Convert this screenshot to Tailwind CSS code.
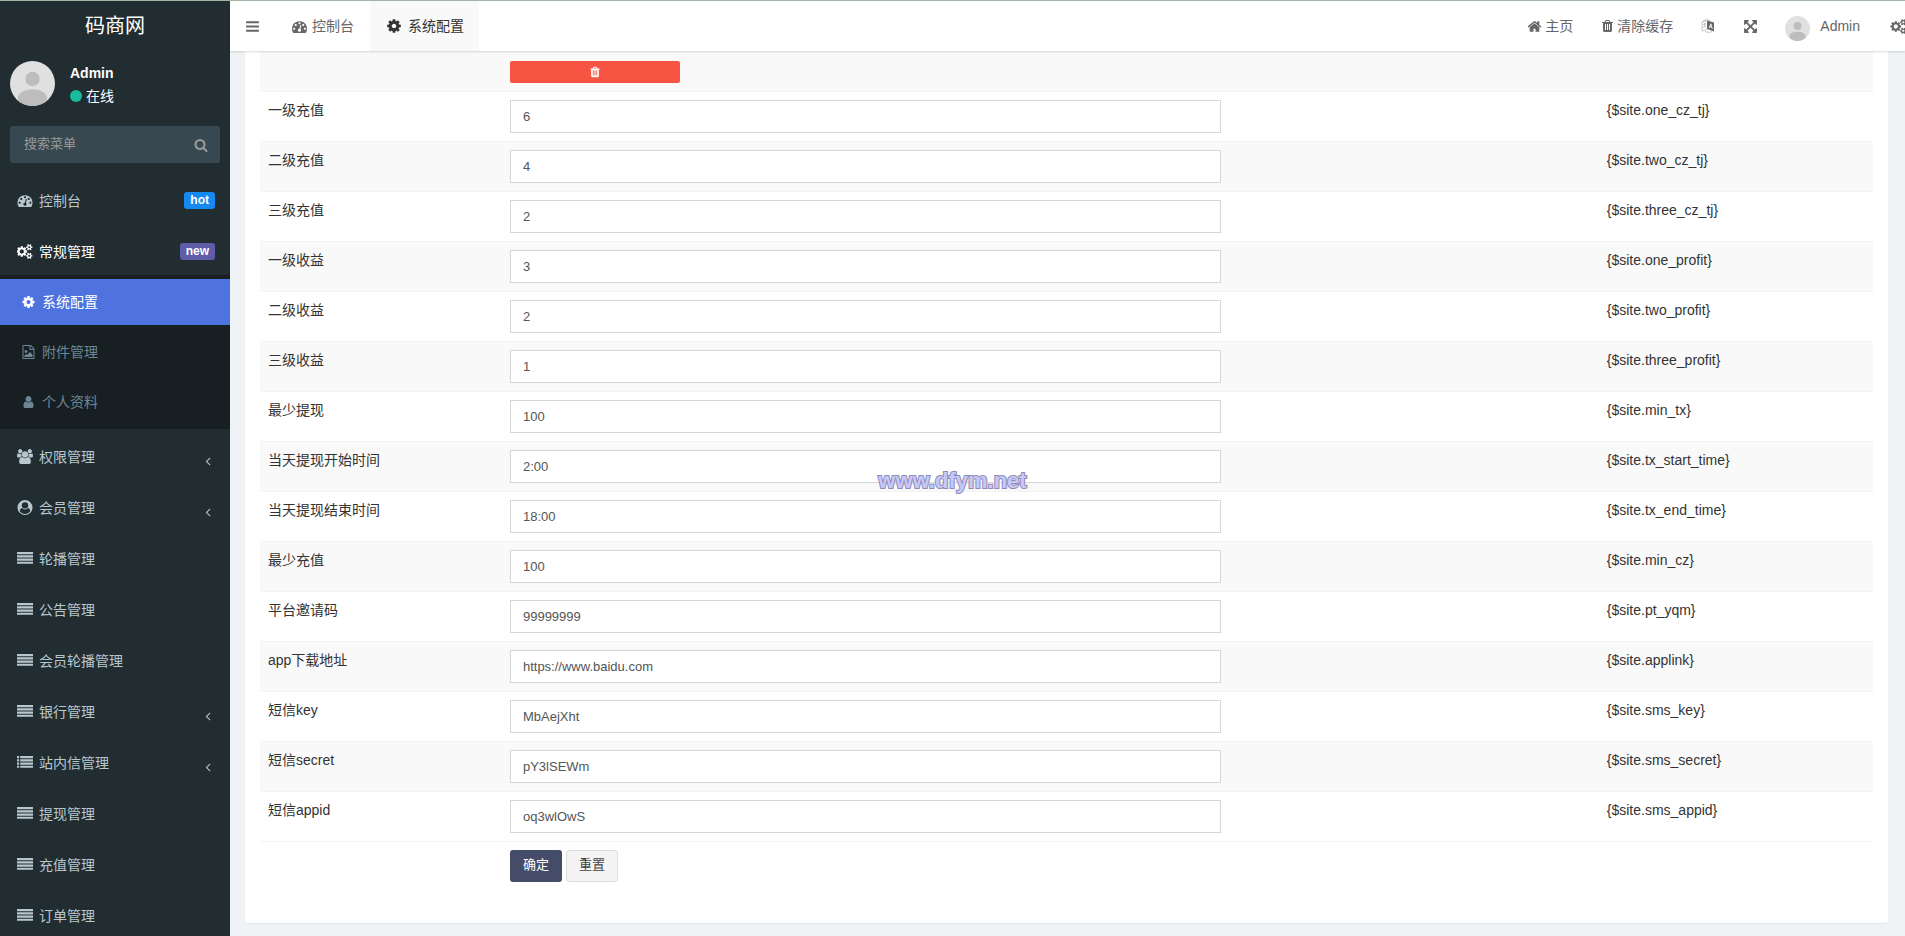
<!DOCTYPE html>
<html lang="zh-CN">
<head>
<meta charset="utf-8">
<meta name="viewport" content="width=device-width, initial-scale=1">
<title>系统配置 - 码商网</title>
<script src="https://cdn.jsdelivr.net/npm/@tailwindcss/browser@4"></script>
</head>
<body class="h-screen overflow-hidden border-t border-[#a3b3a5] bg-[#eff3f6] font-['Liberation_Sans','Noto_Sans_CJK_SC',sans-serif] text-sm text-[#333]">

<svg class="hidden" aria-hidden="true">
  <symbol id="bars" viewBox="0 0 1792 1792"><path d="M1664 1344v128q0 26-19 45t-45 19h-1408q-26 0-45-19t-19-45v-128q0-26 19-45t45-19h1408q26 0 45 19t19 45zm0-512v128q0 26-19 45t-45 19h-1408q-26 0-45-19t-19-45v-128q0-26 19-45t45-19h1408q26 0 45 19t19 45zm0-512v128q0 26-19 45t-45 19h-1408q-26 0-45-19t-19-45v-128q0-26 19-45t45-19h1408q26 0 45 19t19 45z"/></symbol>
  <symbol id="cog" viewBox="0 0 1792 1792"><path d="M1152 896q0-106-75-181t-181-75-181 75-75 181 75 181 181 75 181-75 75-181zm512-109v222q0 12-8 23t-20 13l-185 28q-19 54-39 91 35 50 107 138 10 12 10 25t-9 23q-27 37-99 108t-94 71q-12 0-26-9l-138-108q-44 23-91 38-16 136-29 186-7 28-36 28h-222q-14 0-24.5-8.5t-11.5-21.5l-28-184q-49-16-90-37l-141 107q-10 9-25 9-14 0-25-11-126-114-165-168-7-10-7-23 0-12 8-23 15-21 51-66.5t54-70.5q-27-50-41-99l-183-27q-13-2-21-12.5t-8-23.5v-222q0-12 8-23t19-13l186-28q14-46 39-92-40-57-107-138-10-12-10-24 0-10 9-23 26-36 98.5-107.5t94.5-71.5q13 0 26 10l138 107q44-23 91-38 16-136 29-186 7-28 36-28h222q14 0 24.5 8.5t11.5 21.5l28 184q49 16 90 37l142-107q9-9 24-9 13 0 25 10 129 119 165 170 7 8 7 22 0 12-8 23-15 21-51 66.5t-54 70.5q26 50 41 98l183 28q13 2 21 12.5t8 23.5z"/></symbol>
  <symbol id="cogs" viewBox="0 0 1920 1792"><path d="M832 896q0-106-75-181t-181-75-181 75-75 181 75 181 181 75 181-75 75-181zm768 512q0-52-38-90t-90-38-90 38-38 90q0 53 37.5 90.5t90.5 37.5 90.5-37.5 37.5-90.5zm0-1024q0-52-38-90t-90-38-90 38-38 90q0 53 37.5 90.5t90.5 37.5 90.5-37.5 37.5-90.5zm-384 421v185q0 10-7 19.5t-16 10.5l-155 24q-11 35-32 76 34 48 90 115 7 11 7 20 0 12-7 19-23 30-82.5 89.5t-78.5 59.5q-11 0-21-7l-115-90q-37 19-77 31-11 108-23 155-7 24-30 24h-186q-11 0-20-7.5t-10-17.5l-23-153q-34-10-75-31l-118 89q-7 7-20 7-11 0-21-8-144-133-144-160 0-9 7-19 10-14 41-53t47-61q-23-44-35-82l-152-24q-10-1-17-9.5t-7-19.5v-185q0-10 7-19.5t16-10.5l155-24q11-35 32-76-34-48-90-115-7-11-7-20 0-12 7-20 22-30 82-89t79-59q11 0 21 7l115 90q34-18 77-32 11-108 23-154 7-24 30-24h186q11 0 20 7.5t10 17.5l23 153q34 10 75 31l118-89q8-7 20-7 11 0 21 8 144 133 144 160 0 8-7 19-12 16-42 54t-45 60q23 48 34 82l152 23q10 2 17 10.5t7 19.5zm640 533v140q0 16-149 31-12 27-30 52 51 113 51 138 0 4-4 7-122 71-124 71-8 0-46-47t-52-68q-20 2-30 2t-30-2q-14 21-52 68t-46 47q-2 0-124-71-4-3-4-7 0-25 51-138-18-25-30-52-149-15-149-31v-140q0-16 149-31 13-29 30-52-51-113-51-138 0-4 4-7 4-2 35-20t59-34 30-16q8 0 46 46.5t52 67.5q20-2 30-2t30 2q51-71 92-112l6-2q4 0 124 70 4 3 4 7 0 25-51 138 17 23 30 52 149 15 149 31zm0-1024v140q0 16-149 31-12 27-30 52 51 113 51 138 0 4-4 7-122 71-124 71-8 0-46-47t-52-68q-20 2-30 2t-30-2q-14 21-52 68t-46 47q-2 0-124-71-4-3-4-7 0-25 51-138-18-25-30-52-149-15-149-31v-140q0-16 149-31 13-29 30-52-51-113-51-138 0-4 4-7 4-2 35-20t59-34 30-16q8 0 46 46.5t52 67.5q20-2 30-2t30 2q51-71 92-112l6-2q4 0 124 70 4 3 4 7 0 25-51 138 17 23 30 52 149 15 149 31z"/></symbol>
  <symbol id="search" viewBox="0 0 1792 1792"><path d="M1216 832q0-185-131.5-316.5t-316.5-131.5-316.5 131.5-131.5 316.5 131.5 316.5 316.5 131.5 316.5-131.5 131.5-316.5zm512 832q0 52-38 90t-90 38q-54 0-90-38l-343-342q-179 124-399 124-143 0-273.5-55.5t-225-150-150-225-55.5-273.5 55.5-273.5 150-225 225-150 273.5-55.5 273.5 55.5 225 150 150 225 55.5 273.5q0 220-124 399l343 343q37 37 37 90z"/></symbol>
  <symbol id="dashboard" viewBox="0 0 1792 1792"><path d="M384 1152q0-53-37.5-90.5t-90.5-37.5-90.5 37.5-37.5 90.5 37.5 90.5 90.5 37.5 90.5-37.5 37.5-90.5zm192-448q0-53-37.5-90.5t-90.5-37.5-90.5 37.5-37.5 90.5 37.5 90.5 90.5 37.5 90.5-37.5 37.5-90.5zm428 481l101-382q6-26-7.5-48.5t-38.5-29.5-48 6.5-30 39.5l-101 382q-60 5-107 43.5t-63 98.5q-20 77 20 146t117 89 146-20 89-117q16-60-6-117t-72-91zm660-33q0-53-37.5-90.5t-90.5-37.5-90.5 37.5-37.5 90.5 37.5 90.5 90.5 37.5 90.5-37.5 37.5-90.5zm-640-640q0-53-37.5-90.5t-90.5-37.5-90.5 37.5-37.5 90.5 37.5 90.5 90.5 37.5 90.5-37.5 37.5-90.5zm448 192q0-53-37.5-90.5t-90.5-37.5-90.5 37.5-37.5 90.5 37.5 90.5 90.5 37.5 90.5-37.5 37.5-90.5zm320 448q0 261-141 483-19 29-54 29h-1402q-35 0-54-29-141-221-141-483 0-182 71-348t191-286 286-191 348-71 348 71 286 191 191 286 71 348z"/></symbol>
  <symbol id="home" viewBox="0 0 1792 1792"><path d="M1472 992v480q0 26-19 45t-45 19h-384v-384h-256v384h-384q-26 0-45-19t-19-45v-480q0-1 .5-3t.5-3l575-474 575 474q1 2 1 6zm223-69l-62 74q-8 9-21 11h-3q-13 0-21-7l-692-577-692 577q-12 8-24 7-13-2-21-11l-62-74q-8-10-7-23.5t11-21.5l719-599q32-26 76-26t76 26l244 204v-195q0-14 9-23t23-9h192q14 0 23 9t9 23v408l219 182q10 8 11 21.5t-7 23.5z"/></symbol>
  <symbol id="trash" viewBox="192 0 1408 1792"><path d="M704 1376v-704q0-14-9-23t-23-9h-64q-14 0-23 9t-9 23v704q0 14 9 23t23 9h64q14 0 23-9t9-23zm256 0v-704q0-14-9-23t-23-9h-64q-14 0-23 9t-9 23v704q0 14 9 23t23 9h64q14 0 23-9t9-23zm256 0v-704q0-14-9-23t-23-9h-64q-14 0-23 9t-9 23v704q0 14 9 23t23 9h64q14 0 23-9t9-23zm-544-992h448l-48-117q-7-9-17-11h-317q-10 2-17 11zm928 32v64q0 14-9 23t-23 9h-96v948q0 83-47 143.5t-113 60.5h-832q-66 0-113-58.5t-47-141.5v-952h-96q-14 0-23-9t-9-23v-64q0-14 9-23t23-9h309l70-167q15-37 54-63t79-26h320q40 0 79 26t54 63l70 167h309q14 0 23 9t9 23z"/></symbol>
  <symbol id="arrows" viewBox="0 0 1792 1792"><path d="M1411 541l-355 355 355 355 144-144q29-31 70-14 39 17 39 59v448q0 26-19 45t-45 19h-448q-42 0-59-40-17-39 14-69l144-144-355-355-355 355 144 144q31 30 14 69-17 40-59 40h-448q-26 0-45-19t-19-45v-448q0-42 40-59 39-17 69 14l144 144 355-355-355-355-144 144q-19 19-45 19-12 0-24-5-40-17-40-59v-448q0-26 19-45t45-19h448q42 0 59 40 17 39-14 69l-144 144 355 355 355-355-144-144q-31-30-14-69 17-40 59-40h448q26 0 45 19t19 45v448q0 42-39 59-13 5-25 5-26 0-45-19z"/></symbol>
  <symbol id="user" viewBox="0 0 1792 1792"><path d="M1536 1399q0 109-62.5 187t-150.5 78h-854q-88 0-150.5-78t-62.5-187q0-85 8.5-160.5t31.5-152 58.5-131 94-89 134.5-34.5q131 128 313 128t313-128q76 0 134.5 34.5t94 89 58.5 131 31.5 152 8.5 160.5zm-256-887q0 159-112.5 271.5t-271.5 112.5-271.5-112.5-112.5-271.5 112.5-271.5 271.5-112.5 271.5 112.5 112.5 271.5z"/></symbol>
  <symbol id="group" viewBox="0 0 1920 1792"><path d="M593 896q-162 5-265 128h-134q-82 0-138-40.5t-56-118.5q0-353 124-353 6 0 43.5 21t97.5 42.5 119 21.5q67 0 133-23-5 37-5 66 0 139 81 256zm1071 637q0 120-73 189.5t-194 69.5h-874q-121 0-194-69.5t-73-189.5q0-53 3.5-103.5t14-109 26.5-108.5 43-97.5 62-81 85.5-53.5 111.5-20q10 0 43 21.5t73 48 107 48 135 21.5 135-21.5 107-48 73-48 43-21.5q61 0 111.5 20t85.5 53.5 62 81 43 97.5 26.5 108.5 14 109 3.5 103.5zm-1024-1277q0 106-75 181t-181 75-181-75-75-181 75-181 181-75 181 75 75 181zm704 384q0 159-112.5 271.5t-271.5 112.5-271.5-112.5-112.5-271.5 112.5-271.5 271.5-112.5 271.5 112.5 112.5 271.5zm576 225q0 78-56 118.5t-138 40.5h-134q-103-123-265-128 81-117 81-256 0-29-5-66 66 23 133 23 59 0 119-21.5t97.5-42.5 43.5-21q124 0 124 353zm-128-609q0 106-75 181t-181 75-181-75-75-181 75-181 181-75 181 75 75 181z"/></symbol>
  <symbol id="image" viewBox="0 0 1792 1792"><path d="M1596 380q28 28 48 76t20 88v1152q0 40-28 68t-68 28h-1344q-40 0-68-28t-28-68v-1600q0-40 28-68t68-28h896q40 0 88 20t76 48zm-444-244v376h376q-10-29-22-41l-313-313q-12-12-41-22zm384 1528v-1024h-416q-40 0-68-28t-28-68v-416h-768v1536h1280zm-128-448v320h-1024v-192l192-192 128 128 384-384zm-832-192q-80 0-136-56t-56-136 56-136 136-56 136 56 56 136-56 136-136 56z"/></symbol>
  <symbol id="member" viewBox="0 0 1792 1792"><path fill-rule="evenodd" d="M1523 1339q-22-155-87.500-257.500t-184.500-118.500q-67 74-159.500 115.500t-195.500 41.500-195.500-41.500-159.500-115.500q-119 16-184.500 118.500t-87.500 257.500q106 150 271 237.500t356 87.500 356-87.500 271-237.500zM1280 640a384 384 0 1 0-768 0a384 384 0 1 0 768 0zM1792 896a896 896 0 1 0-1792 0a896 896 0 1 0 1792 0z"/></symbol>
  <symbol id="lines" viewBox="0 0 15 14"><path d="M0 1h15v2H0zM0 4h15v2H0zM0 7h15v2H0zM0 10h15v2H0z"/></symbol>
  <symbol id="list" viewBox="0 0 15 14"><path d="M0 1h2v2H0zM0 4h2v2H0zM0 7h2v2H0zM0 10h2v2H0zM3 1h12v2H3zM3 4h12v2H3zM3 7h12v2H3zM3 10h12v2H3z"/></symbol>
  <symbol id="left" viewBox="0 0 1792 1792"><path d="M1203 544q0 13-10 23l-393 393 393 393q10 10 10 23t-10 23l-50 50q-10 10-23 10t-23-10l-466-466q-10-10-10-23t10-23l466-466q10-10 23-10t23 10l50 50q10 10 10 23z"/></symbol>
  <symbol id="language" viewBox="0 0 14 14"><path d="M6 1.500L13 3.500v9L6 10z"/><path fill="none" stroke="currentColor" stroke-opacity=".6" stroke-width=".6" d="M6 1.500L1 3v9l5-1.500M2 5.500l3-1M3.500 4v2M2.300 9L4.500 5.500M3 6.500l2 2M2 2l4-1.500 3 1M4 12.500q4 2 7 0"/><path fill="none" stroke="#fff" stroke-width=".9" d="M8.300 9L9.800 4.800 11.300 9.800M8.800 7.500l2 .6"/></symbol>
  <symbol id="avatar" viewBox="0 0 45 45"><path fill="#e0e0e0" d="M0 0h45v45H0z"/><circle cx="22.500" cy="18" r="7.200" fill="#bdbdbd"/><path fill="#bdbdbd" d="M8 36c1-5 7-7.500 14.500-7.500S36 31 37 36v9H8z"/></symbol>
</svg>

<div class="flex h-full">
  <aside class="flex w-[230px] shrink-0 flex-col overflow-hidden bg-[#222d32] text-[#b8c7ce]">
    <a href="#" class="flex h-[50px] shrink-0 items-center justify-center text-xl text-white">码商网</a>
    <div class="flex shrink-0 items-center gap-[15px] px-2.5 py-2.5 text-white">
      <svg class="size-[45px] rounded-full"><use href="#avatar"/></svg>
      <div class="flex flex-col gap-[3px] pt-0.5 leading-5">
        <p class="font-bold">Admin</p>
        <p class="flex items-center gap-1"><span class="size-3 rounded-full bg-[#18bc9c]"></span>在线</p>
      </div>
    </div>
    <form class="mx-2.5 mt-2.5 flex h-[37px] shrink-0 items-center rounded-[3px] bg-[#374850] pr-3 pl-3.5 text-[#999]">
      <input type="text" aria-label="搜索菜单" placeholder="搜索菜单" class="min-w-0 flex-1 bg-transparent text-[13px] outline-none placeholder:text-[#999]">
      <button type="button" aria-label="搜索"><svg class="size-[14px] fill-current"><use href="#search"/></svg></button>
    </form>
    <nav class="mt-[10px] shrink-0">
      <a href="#" class="flex h-[51px] items-center gap-1.5 pt-1 pr-[15px] pl-[17px]"><svg class="h-[15px] w-4 fill-current"><use href="#dashboard"/></svg>控制台<span class="ml-auto rounded-[3px] bg-[#1688f1] px-1.5 text-xs leading-[17px] font-bold text-white">hot</span></a>
      <a href="#" class="flex h-[51px] items-center gap-1.5 pt-1 pr-[15px] pl-[17px] text-white"><svg class="h-[15px] w-4 fill-current"><use href="#cogs"/></svg>常规管理<span class="ml-auto rounded-[3px] bg-[#605ca8] px-1.5 text-xs leading-[17px] font-bold text-white">new</span></a>
      <div class="flex flex-col gap-1 bg-[#181f23] py-1 text-[#6c8894]">
        <a href="#" class="flex h-[46px] items-center gap-1.5 bg-[#4e73df] pl-[21px] text-white"><svg class="h-[14px] w-[15px] fill-current"><use href="#cog"/></svg>系统配置</a>
        <a href="#" class="flex h-[46px] items-center gap-1.5 pl-[21px]"><svg class="h-[14px] w-[15px] fill-current"><use href="#image"/></svg>附件管理</a>
        <a href="#" class="flex h-[46px] items-center gap-1.5 pl-[21px]"><svg class="h-[14px] w-[15px] fill-current"><use href="#user"/></svg>个人资料</a>
      </div>
      <a href="#" class="flex h-[51px] items-center gap-1.5 pt-1 pr-[15px] pl-[17px]"><svg class="h-[15px] w-4 fill-current"><use href="#group"/></svg>权限管理<svg class="mt-2 ml-auto size-[14px] fill-current"><use href="#left"/></svg></a>
      <a href="#" class="flex h-[51px] items-center gap-1.5 pt-1 pr-[15px] pl-[17px]"><svg class="h-[15px] w-4 fill-current"><use href="#member"/></svg>会员管理<svg class="mt-2 ml-auto size-[14px] fill-current"><use href="#left"/></svg></a>
      <a href="#" class="flex h-[51px] items-center gap-1.5 pt-1 pr-[15px] pl-[17px]"><svg class="h-[15px] w-4 fill-current"><use href="#lines"/></svg>轮播管理</a>
      <a href="#" class="flex h-[51px] items-center gap-1.5 pt-1 pr-[15px] pl-[17px]"><svg class="h-[15px] w-4 fill-current"><use href="#lines"/></svg>公告管理</a>
      <a href="#" class="flex h-[51px] items-center gap-1.5 pt-1 pr-[15px] pl-[17px]"><svg class="h-[15px] w-4 fill-current"><use href="#lines"/></svg>会员轮播管理</a>
      <a href="#" class="flex h-[51px] items-center gap-1.5 pt-1 pr-[15px] pl-[17px]"><svg class="h-[15px] w-4 fill-current"><use href="#lines"/></svg>银行管理<svg class="mt-2 ml-auto size-[14px] fill-current"><use href="#left"/></svg></a>
      <a href="#" class="flex h-[51px] items-center gap-1.5 pt-1 pr-[15px] pl-[17px]"><svg class="h-[15px] w-4 fill-current"><use href="#list"/></svg>站内信管理<svg class="mt-2 ml-auto size-[14px] fill-current"><use href="#left"/></svg></a>
      <a href="#" class="flex h-[51px] items-center gap-1.5 pt-1 pr-[15px] pl-[17px]"><svg class="h-[15px] w-4 fill-current"><use href="#lines"/></svg>提现管理</a>
      <a href="#" class="flex h-[51px] items-center gap-1.5 pt-1 pr-[15px] pl-[17px]"><svg class="h-[15px] w-4 fill-current"><use href="#lines"/></svg>充值管理</a>
      <a href="#" class="flex h-[51px] items-center gap-1.5 pt-1 pr-[15px] pl-[17px]"><svg class="h-[15px] w-4 fill-current"><use href="#lines"/></svg>订单管理</a>
    </nav>
  </aside>

  <div class="flex min-w-0 flex-1 flex-col">
    <header class="z-10 flex h-[50px] shrink-0 items-stretch overflow-hidden bg-white text-[#666] shadow-[0_1px_2px_rgba(0,0,0,0.15)]">
      <button type="button" aria-label="菜单" class="pr-[17px] pl-[15px]"><svg class="size-[15px] fill-current"><use href="#bars"/></svg></button>
      <a href="#" class="flex items-center gap-[5px] px-[15px]"><svg class="size-[15px] fill-current"><use href="#dashboard"/></svg>控制台</a>
      <a href="#" class="ml-px flex items-center gap-1.5 bg-[#f9f9f9] pr-[15px] pl-4 text-[#333]"><svg class="size-4 fill-current"><use href="#cog"/></svg>系统配置</a>
      <div class="ml-auto -mr-[3px] flex items-center">
        <a href="#" class="mr-[29px] flex items-center gap-[3px]"><svg class="size-[15px] fill-current"><use href="#home"/></svg>主页</a>
        <a href="#" class="mr-[28px] flex items-center gap-1"><svg class="h-[14px] w-[11px] fill-current"><use href="#trash"/></svg>清除缓存</a>
        <a href="#" aria-label="语言" class="mr-[28px]"><svg class="size-[14px] fill-current"><use href="#language"/></svg></a>
        <a href="#" aria-label="全屏" class="mr-[27px]"><svg class="size-[15px] fill-current"><use href="#arrows"/></svg></a>
        <a href="#" class="mr-[30px] flex items-center gap-2.5"><svg class="mt-1 size-[25px] rounded-full"><use href="#avatar"/></svg>Admin</a>
        <a href="#" aria-label="设置"><svg class="h-[15px] w-[18px] fill-current"><use href="#cogs"/></svg></a>
      </div>
    </header>

    <main class="min-h-0 flex-1 overflow-hidden pr-[17px] pl-[15px]">
      <form class="rounded-b-[3px] bg-white px-[15px] pb-[33px] shadow-[0_1px_1px_rgba(0,0,0,0.05)]">
        <table class="w-full table-fixed">
          <colgroup><col class="w-[15%]"><col class="w-[68%]"><col class="w-[17%]"></colgroup>
          <tbody id="rows">
            <tr class="h-10 bg-[#f9f9f9]"><td></td><td class="px-2 pt-0.5"><button type="button" aria-label="删除" class="flex h-[22px] w-[170px] items-center justify-center rounded-[2px] bg-[#f75444] text-white"><svg class="h-3 w-2.5 fill-current"><use href="#trash"/></svg></button></td><td></td></tr>
          </tbody>
          <tfoot>
            <tr class="border-t border-[#f4f4f4]"><td></td><td class="p-2"><div class="flex gap-1 text-[13px]"><button type="submit" class="h-8 w-[52px] rounded-[3px] bg-[#444c69] text-white">确定</button><button type="reset" class="h-8 w-[52px] rounded-[3px] border border-[#ddd] bg-[#f4f4f4] text-[#444]">重置</button></div></td><td></td></tr>
          </tfoot>
        </table>
      </form>
    </main>
  </div>
</div>

<p class="pointer-events-none absolute inset-x-0 top-[467px] z-20 text-center text-[22px] leading-7 font-bold text-[#c8c8f8] [-webkit-text-stroke:2px_#8c8cb4] [paint-order:stroke_fill]">www.dfym.net</p>

<script>
const fields = [
  ['一级充值', '6', 'one_cz_tj'], ['二级充值', '4', 'two_cz_tj'], ['三级充值', '2', 'three_cz_tj'],
  ['一级收益', '3', 'one_profit'], ['二级收益', '2', 'two_profit'], ['三级收益', '1', 'three_profit'],
  ['最少提现', '100', 'min_tx'], ['当天提现开始时间', '2:00', 'tx_start_time'], ['当天提现结束时间', '18:00', 'tx_end_time'],
  ['最少充值', '100', 'min_cz'], ['平台邀请码', '99999999', 'pt_yqm'], ['app下载地址', 'https://www.baidu.com', 'applink'],
  ['短信key', 'MbAejXht', 'sms_key'], ['短信secret', 'pY3lSEWm', 'sms_secret'], ['短信appid', 'oq3wlOwS', 'sms_appid']
];
document.getElementById('rows').insertAdjacentHTML('beforeend', fields.map(([label, value, name]) => `
  <tr class="border-t border-[#f4f4f4] even:bg-white odd:bg-[#f9f9f9]">
    <td class="p-2 align-top leading-5"><label for="${name}">${label}</label></td>
    <td class="p-2 align-top"><input id="${name}" type="text" value="${value}" class="block h-[33px] w-[65.8%] border border-[#d2d6de] bg-white px-3 text-[13px] text-[#555] outline-none"></td>
    <td class="p-2 align-top leading-5">{$site.${name}}</td>
  </tr>`).join(''));
</script>
</body>
</html>
